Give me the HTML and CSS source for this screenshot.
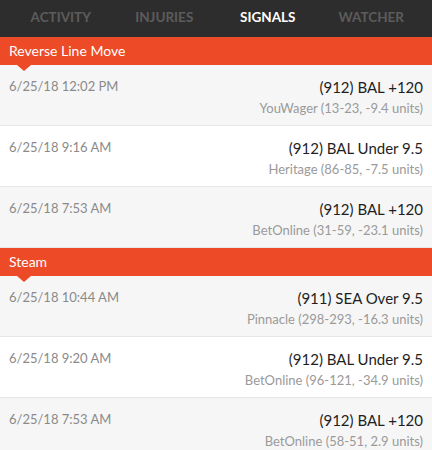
FILE: index.html
```html
<!DOCTYPE html>
<html lang="en">
<head>
    <meta charset="UTF-8">
    <meta name="viewport" content="width=device-width, initial-scale=1.0">
    <title>Signals</title>
    <link rel="stylesheet" href="styles.css">
</head>
<body>
    <nav class="tabs">
        <div class="tab">Activity</div>
        <div class="tab">Injuries</div>
        <div class="tab active">Signals</div>
        <div class="tab">Watcher</div>
    </nav>

    <section class="section">
        <div class="section-title">Reverse Line Move</div>
        <div class="signal">
            <div class="signal-date">6/25/18 12:02 PM</div>
            <div class="signal-info">
                <div class="signal-pick">(912) BAL +120</div>
                <div class="signal-book">YouWager (13-23, -9.4 units)</div>
            </div>
        </div>
        <div class="signal">
            <div class="signal-date">6/25/18 9:16 AM</div>
            <div class="signal-info">
                <div class="signal-pick">(912) BAL Under 9.5</div>
                <div class="signal-book">Heritage (86-85, -7.5 units)</div>
            </div>
        </div>
        <div class="signal">
            <div class="signal-date">6/25/18 7:53 AM</div>
            <div class="signal-info">
                <div class="signal-pick">(912) BAL +120</div>
                <div class="signal-book">BetOnline (31-59, -23.1 units)</div>
            </div>
        </div>
    </section>

    <section class="section">
        <div class="section-title">Steam</div>
        <div class="signal">
            <div class="signal-date">6/25/18 10:44 AM</div>
            <div class="signal-info">
                <div class="signal-pick">(911) SEA Over 9.5</div>
                <div class="signal-book">Pinnacle (298-293, -16.3 units)</div>
            </div>
        </div>
        <div class="signal">
            <div class="signal-date">6/25/18 9:20 AM</div>
            <div class="signal-info">
                <div class="signal-pick">(912) BAL Under 9.5</div>
                <div class="signal-book">BetOnline (96-121, -34.9 units)</div>
            </div>
        </div>
        <div class="signal">
            <div class="signal-date">6/25/18 7:53 AM</div>
            <div class="signal-info">
                <div class="signal-pick">(912) BAL +120</div>
                <div class="signal-book">BetOnline (58-51, 2.9 units)</div>
            </div>
        </div>
    </section>
</body>
</html>
```

FILE: styles.css
```css
body {
    margin: 0;
    background: #ffffff;
    font-family: 'Lato', 'Open Sans', sans-serif;
    overflow: hidden;
}

.tabs {
    display: grid;
    grid-template-columns: repeat(4, 1fr);
    height: 37px;
    padding: 0 9px;
    background: #2e2d2d;
}

.tab {
    display: flex;
    justify-content: center;
    align-items: center;
    padding-bottom: 3px;
    color: #5c5c5c;
    font-size: 13.5px;
    font-weight: 700;
    text-transform: uppercase;
}

.tab.active {
    color: #ffffff;
}

.section-title {
    position: relative;
    height: 28px;
    padding: 0 9px;
    background: #ed4a27;
    color: #ffffff;
    font-size: 14px;
    line-height: 27px;
}

.section-title::after {
    content: '';
    position: absolute;
    left: 17px;
    bottom: -6px;
    border-left: 7px solid transparent;
    border-right: 7px solid transparent;
    border-top: 6px solid #ed4a27;
}

.signal {
    display: flex;
    justify-content: space-between;
    height: 61px;
    padding: 12px 9px 0;
    box-sizing: border-box;
    border-bottom: 1px solid #e6e6e6;
    background: #f6f6f6;
}

.signal:nth-child(odd) {
    background: #ffffff;
}

.signal-date {
    color: #8a8a8a;
    font-size: 13px;
    line-height: 18px;
}

.signal-info {
    text-align: right;
}

.signal-pick {
    color: #1f1f1f;
    font-size: 15px;
    line-height: 20px;
}

.signal-book {
    margin-top: 3px;
    color: #9a9a9a;
    font-size: 13px;
    line-height: 17px;
}
```
